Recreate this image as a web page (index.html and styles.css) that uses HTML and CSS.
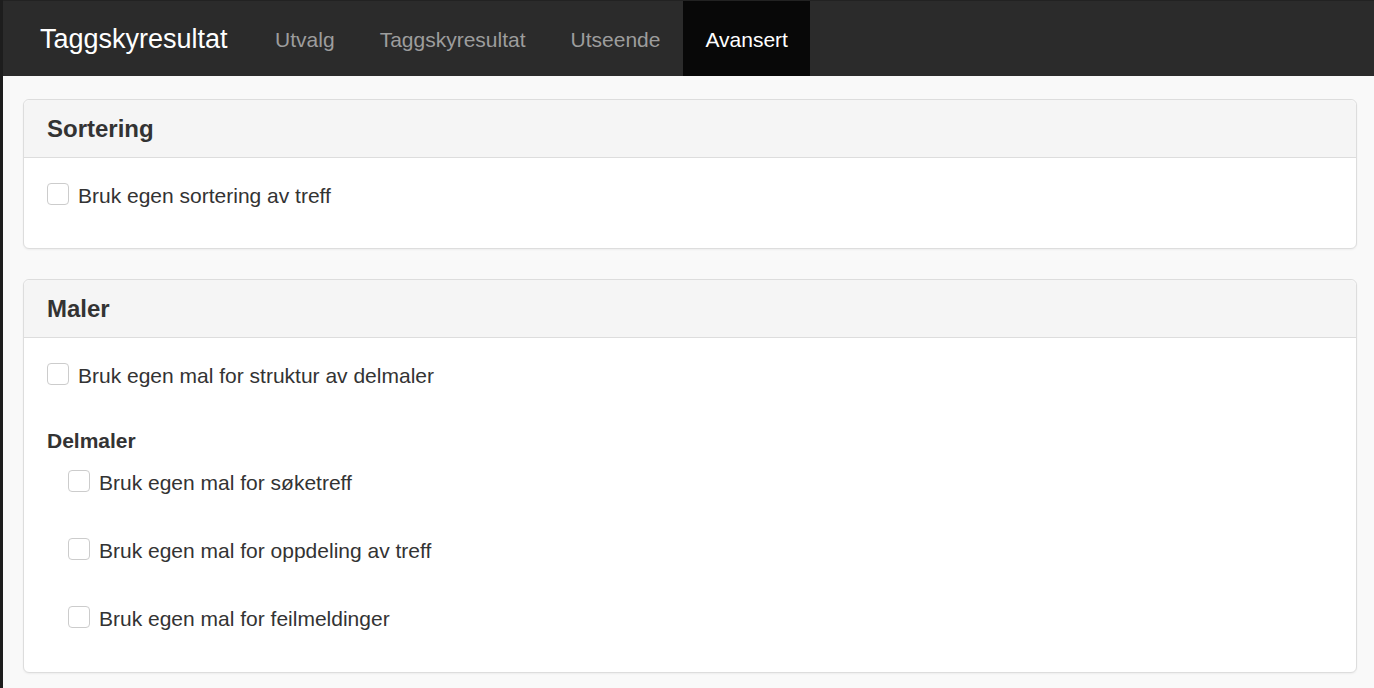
FILE: index.html
```html
<!DOCTYPE html>
<html lang="nb">

<head>
  <meta charset="UTF-8">
  <meta name="viewport" content="width=device-width, initial-scale=1.0">
  <title>Taggskyresultat</title>
  <link rel="stylesheet" href="styles.css">
</head>

<body>
  <div class="page">
    <!-- Navigasjon -->
    <nav class="navbar">
      <a href="#" class="brand">Taggskyresultat</a>
      <ul class="nav">
        <li><a href="#">Utvalg</a></li>
        <li><a href="#">Taggskyresultat</a></li>
        <li><a href="#">Utseende</a></li>
        <li class="active"><a href="#">Avansert</a></li>
      </ul>
    </nav>

    <div class="content">
      <!-- Sortering -->
      <div class="panel panel-sort">
        <div class="panel-heading">
          <h3>Sortering</h3>
        </div>
        <div class="panel-body">
          <label class="checkbox"><input type="checkbox"> Bruk egen sortering av treff</label>
        </div>
      </div>

      <!-- Maler -->
      <div class="panel">
        <div class="panel-heading">
          <h3>Maler</h3>
        </div>
        <div class="panel-body">
          <label class="checkbox"><input type="checkbox"> Bruk egen mal for struktur av delmaler</label>
          <div class="group-label">Delmaler</div>
          <div class="sub-list">
            <label class="checkbox"><input type="checkbox"> Bruk egen mal for søketreff</label>
            <label class="checkbox"><input type="checkbox"> Bruk egen mal for oppdeling av treff</label>
            <label class="checkbox"><input type="checkbox"> Bruk egen mal for feilmeldinger</label>
          </div>
        </div>
      </div>
    </div>
  </div>
</body>

</html>
```

FILE: styles.css
```css
/* Globalt */
body {
  margin: 0;
  padding: 0;
  font-family: "Liberation Sans", Arial, sans-serif;
  font-size: 21px;
  color: #333;
  background-color: #f9f9f9;
}

.page {
  border-left: 3px solid #1d1d1d;
  min-height: 688px;
  box-sizing: border-box;
}

/* Navigasjon */
.navbar {
  display: flex;
  align-items: stretch;
  height: 75px;
  border-top: 1px solid #222;
  background-color: #2b2b2b;
  padding-left: 37px;
}

.brand {
  display: flex;
  align-items: center;
  padding-top: 1px;
  font-size: 27px;
  color: #fff;
  text-decoration: none;
  margin-right: 25px;
}

.nav {
  display: flex;
  list-style-type: none;
  margin: 0;
  padding: 0;
}

.nav li a {
  display: flex;
  align-items: center;
  height: 100%;
  box-sizing: border-box;
  padding: 2px 22.5px 0;
  color: #9d9d9d;
  text-decoration: none;
}

.nav li.active a {
  background-color: #080808;
  color: #fff;
}

/* Innhold */
.content {
  padding: 23px 17px 0 20px;
}

.panel {
  background-color: #fff;
  border: 1px solid #ddd;
  border-radius: 6px;
  box-shadow: 0 1px 2px rgba(0, 0, 0, 0.05);
  margin-bottom: 30px;
}

.panel-heading {
  background-color: #f5f5f5;
  border-bottom: 1px solid #ddd;
  border-radius: 6px 6px 0 0;
  height: 57px;
  display: flex;
  align-items: center;
  padding: 0 23px;
}

.panel-heading h3 {
  margin: 0;
  font-size: 24px;
  font-weight: bold;
}

.panel-body {
  padding: 22px 23px 39px;
}

.panel-sort .panel-body {
  padding-top: 22px;
  padding-bottom: 38px;
}

.checkbox {
  display: flex;
  align-items: center;
  height: 30px;
  gap: 9px;
  line-height: 1;
}

.checkbox input {
  appearance: none;
  -webkit-appearance: none;
  flex-shrink: 0;
  width: 22px;
  height: 22px;
  margin: 0 0 2px;
  border: 1px solid #ccc;
  border-radius: 4px;
  background-color: #fff;
}

.group-label {
  font-weight: bold;
  line-height: 30px;
  margin-top: 36px;
}

.sub-list {
  display: flex;
  flex-direction: column;
  gap: 38px;
  padding-left: 21px;
  margin-top: 11px;
}
```
